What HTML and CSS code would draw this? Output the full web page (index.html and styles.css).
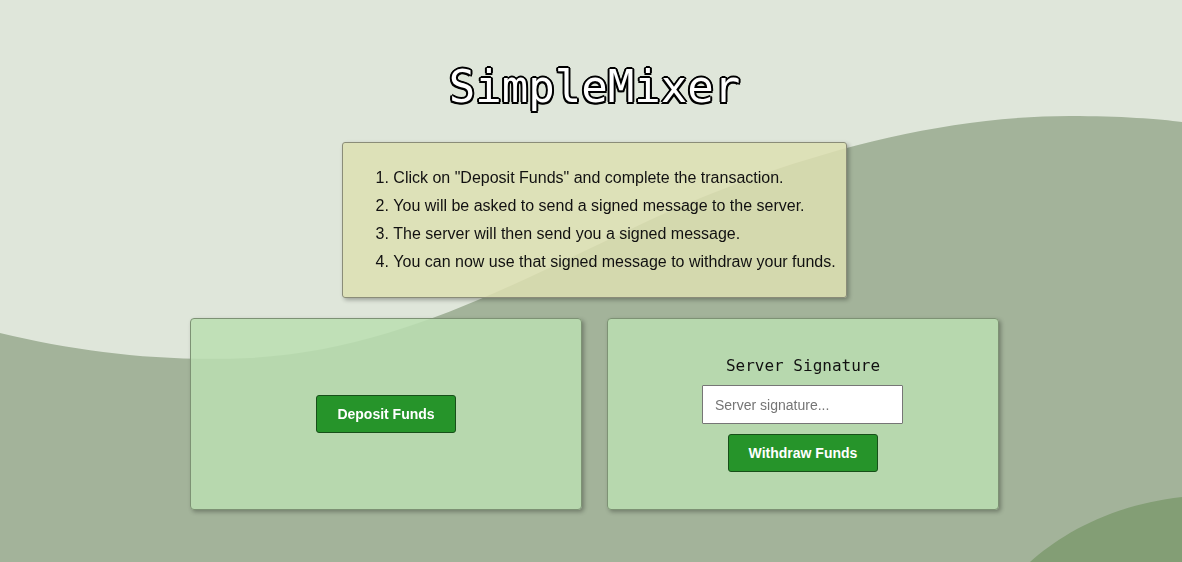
FILE: index.html
```html
<!DOCTYPE html>
<html lang="en">
<head>
<meta charset="utf-8">
<title>SimpleMixer</title>
<link rel="stylesheet" href="styles.css">
</head>
<body>
<svg class="backdrop" viewBox="0 0 1182 562" preserveAspectRatio="none" aria-hidden="true">
  <rect x="0" y="0" width="1182" height="562" fill="#dfe6da"/>
  <path d="M0,333 C80,352 160,362 250,358 C400,350 520,280 650,220 C780,160 930,116 1070,116 C1120,116 1160,119 1182,122 L1182,562 L0,562 Z" fill="#a3b39a"/>
  <path d="M1030,562 C1060,535 1110,505 1182,497 L1182,562 Z" fill="#839e75"/>
</svg>
<main class="page">
  <h1 class="title">SimpleMixer</h1>
  <section class="info">
    <ol class="steps">
      <li>Click on "Deposit Funds" and complete the transaction.</li>
      <li>You will be asked to send a signed message to the server.</li>
      <li>The server will then send you a signed message.</li>
      <li>You can now use that signed message to withdraw your funds.</li>
    </ol>
  </section>
  <div class="cards">
    <section class="card">
      <button class="btn" type="button">Deposit Funds</button>
    </section>
    <section class="card">
      <div class="card-label">Server Signature</div>
      <input class="sig-input" type="text" placeholder="Server signature...">
      <button class="btn" type="button">Withdraw Funds</button>
    </section>
  </div>
</main>
</body>
</html>
```
FILE: styles.css
```css
html, body {
  margin: 0;
  padding: 0;
  height: 100%;
}

body {
  font-family: "Liberation Sans", Arial, sans-serif;
  color: #111;
  overflow: hidden;
}

.backdrop {
  position: fixed;
  inset: 0;
  width: 100%;
  height: 100%;
  z-index: -1;
  display: block;
}

.page {
  display: flex;
  flex-direction: column;
  align-items: center;
  padding: 61px 0 0 7px;
}

.title {
  margin: 0 0 30px;
  font-family: "DejaVu Sans Mono", monospace;
  font-size: 44px;
  font-weight: normal;
  line-height: 51px;
  color: #fff;
  text-shadow:
    1.5px 1.5px 0 #000,
    -1.5px -1.5px 0 #000,
    1.5px -1.5px 0 #000,
    -1.5px 1.5px 0 #000,
    2px 0 0 #000,
    -2px 0 0 #000,
    0 2px 0 #000,
    0 -2px 0 #000;
}

.info {
  background: rgba(221, 223, 178, 0.85);
  border: 1px solid #8a8c78;
  border-radius: 3px;
  box-shadow: 2px 2px 4px rgba(0, 0, 0, 0.3);
  padding: 5px 10px;
}

.steps {
  margin: 16px 0;
  padding-left: 40px;
  font-size: 16px;
}

.steps li {
  line-height: 28px;
}

.cards {
  display: flex;
  gap: 25px;
  margin-top: 20px;
}

.card {
  width: 390px;
  height: 190px;
  background: rgba(186, 222, 177, 0.86);
  border: 1px solid #7d9274;
  border-radius: 4px;
  box-shadow: 2px 2px 4px rgba(0, 0, 0, 0.3);
  display: flex;
  flex-direction: column;
  align-items: center;
  justify-content: center;
}

.card-label {
  font-family: "DejaVu Sans Mono", monospace;
  font-size: 16px;
  line-height: 19px;
  margin-bottom: 10px;
}

.sig-input {
  width: 175px;
  height: 37px;
  padding: 0 12px;
  border: 1px solid #767676;
  border-radius: 1px;
  background: #fff;
  font-family: "Liberation Sans", Arial, sans-serif;
  font-size: 14px;
  margin: 0 1px 10px 0;
  outline: none;
}

.sig-input::placeholder {
  color: #757575;
}

.btn {
  height: 38px;
  padding: 0 20px;
  background: #26942a;
  border: 1px solid #174f19;
  border-radius: 3px;
  color: #fff;
  font-family: "Liberation Sans", Arial, sans-serif;
  font-size: 14px;
  font-weight: bold;
  cursor: pointer;
}
```
